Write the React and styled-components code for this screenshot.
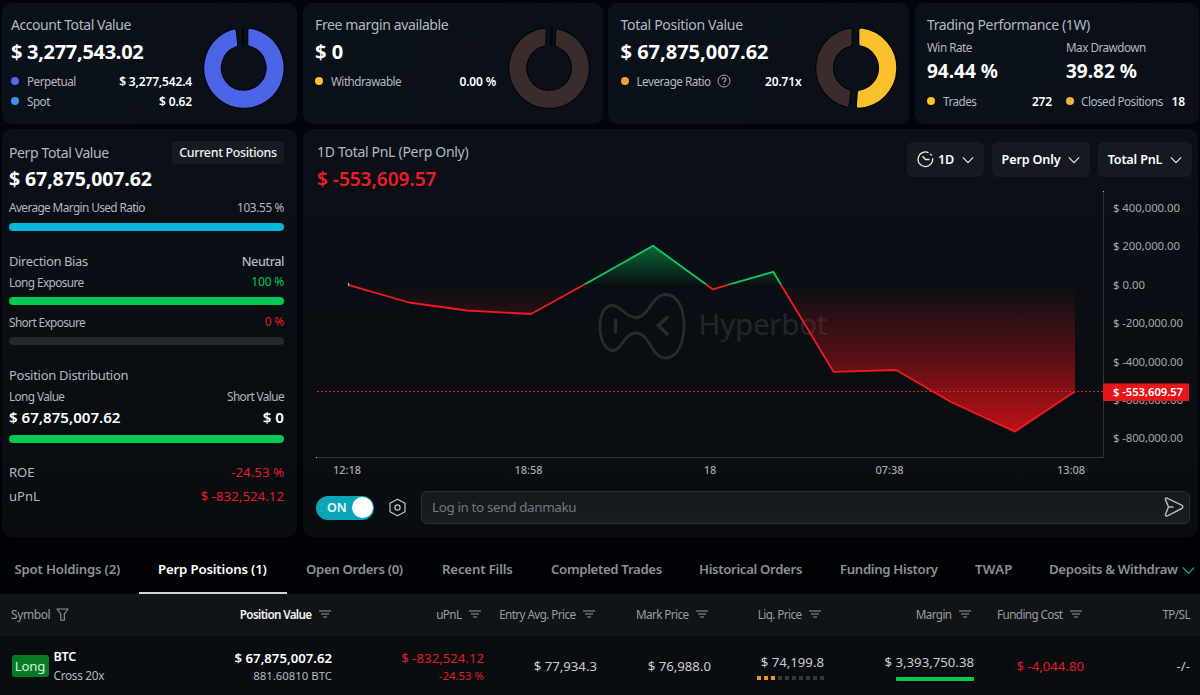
import styled, { createGlobalStyle } from "styled-components";

const GlobalStyle = createGlobalStyle`
  * {
    box-sizing: border-box;
  }
  body {
    margin: 0;
    background: linear-gradient(#02050f, #01040a 60%, #010206 80%);
    color: #f4f5f7;
    font-family: "Noto Sans", sans-serif;
    font-size: 12px;
    overflow: hidden;
  }
`;

const Page = styled.div`
  width: 1200px;
  height: 695px;
  overflow: hidden;
`;

// top cards
const Cards = styled.div`
  display: grid;
  grid-template-columns: 295px 300px 301px 284px;
  column-gap: 5.5px;
  padding: 3px 0 0 2px;
`;

const Card = styled.div`
  display: flex;
  justify-content: space-between;
  height: 121px;
  padding: 8px 12.5px 0 ${(props) => props.$left || 12.5}px;
  border-radius: 10px;
  background: linear-gradient(100deg, #0b1119, #0a0f18);
`;

const CardInfo = styled.div`
  width: ${(props) => props.$width || 181}px;
`;

const Line = styled.div`
  display: flex;
  align-items: center;
  justify-content: space-between;
  height: ${(props) => props.$height}px;
  margin-top: ${(props) => props.$top || 0}px;
  white-space: nowrap;
`;

const Text = styled.span`
  display: inline-flex;
  align-items: center;
  color: ${(props) => props.$color || "#b4b8c0"};
  font-size: ${(props) => props.$size || 12}px;
  font-weight: ${(props) => props.$weight || 400};
  letter-spacing: ${(props) => props.$space || 0}px;
  white-space: nowrap;
`;

const Title = styled(Text)`
  font-size: 14px;
  letter-spacing: ${(props) => props.$space || -0.38}px;
`;

const Label = styled(Text)`
  font-size: 11.7px;
  letter-spacing: -0.5px;
`;

const Value = styled(Text)`
  color: #ffffff;
  font-weight: 600;
  letter-spacing: -0.16px;
`;

const Amount = styled(Text)`
  color: ${(props) => props.$color || "#ffffff"};
  font-size: ${(props) => props.$size || 20}px;
  font-weight: ${(props) => props.$weight || 700};
`;

const Dot = styled.i`
  width: 8px;
  height: 8px;
  margin-right: ${(props) => props.$gap || 8}px;
  border-radius: 50%;
  background: ${(props) => props.color};
`;

const HelpIcon = styled.svg`
  margin-left: 6px;
`;

const Donut = styled.svg`
  width: 90px;
  height: 90px;
  margin: 12px -4px 0 0;
`;

const Columns = styled.div`
  display: grid;
  grid-template-columns: 125px 119px;
  column-gap: 14px;
`;

// middle panels
const Panels = styled.div`
  display: grid;
  grid-template-columns: 295px 895px;
  column-gap: 6px;
  padding: 5px 0 0 2px;
`;

const Panel = styled.div`
  height: 408px;
  border-radius: 10px;
  background: linear-gradient(#0b1018, #0a0e13 55%, #090c11);
`;

const SidePanel = styled(Panel)`
  padding: 10px 13px 0 7px;

  ${Line} {
    padding-bottom: ${1}px;
  }
  ${Label} {
    font-size: 11.8px;
    letter-spacing: -0.6px;
  }
`;

const Badge = styled.span`
  width: 112px;
  height: 23px;
  border-radius: 4px;
  background-color: #161b21;
  color: #f1f2f4;
  font-size: 12.4px;
  font-weight: 500;
  letter-spacing: -0.3px;
  line-height: 23px;
  text-align: center;
`;

const Bar = styled.div`
  height: 8px;
  margin-top: ${(props) => props.$top || 0}px;
  border-radius: 4px;
  background-color: ${(props) => props.color};
`;

const ChartHead = styled.div`
  display: flex;
  justify-content: space-between;
  height: 61px;
  padding: 9px 6px 0 14px;
`;

const Selects = styled.div`
  display: flex;
  gap: 8px;
  padding-top: 4px;
`;

const Select = styled.div`
  display: flex;
  align-items: center;
  justify-content: center;
  gap: 8px;
  width: ${(props) => props.$width}px;
  height: 35px;
  border-radius: 6px;
  background-color: #151a20;
  color: #ffffff;
  font-size: 12.6px;
  font-weight: 600;
  letter-spacing: -0.15px;
`;

const ClockIcon = styled.svg`
  margin-right: -4px;
`;

const Chart = styled.svg`
  display: block;
  width: 895px;
  height: 296px;
  font-family: "Noto Sans", sans-serif;
`;

const ChatRow = styled.div`
  display: flex;
  align-items: center;
  height: 33px;
  margin-top: 5px;
  padding: 0 8px 0 13px;
`;

const Toggle = styled.div`
  display: flex;
  align-items: center;
  justify-content: space-between;
  width: 58px;
  height: 24px;
  padding: 0 1px 0 11px;
  border-radius: 12px;
  background-color: #0ba5b8;
  color: #e8fbff;
  font-size: 12.5px;
  font-weight: 600;

  i {
    width: 21px;
    height: 21px;
    border-radius: 50%;
    background: #ffffff;
  }
`;

const ChatInput = styled.div`
  display: flex;
  flex: 1;
  align-items: center;
  justify-content: space-between;
  height: 33px;
  padding: 0 4px 1px 10px;
  border: 1px solid #2b2f34;
  border-radius: 6px;
  background: linear-gradient(#15191d, #181c20);
  color: #73777c;
  font-size: 13.4px;
  letter-spacing: -0.35px;
`;

const Hexagon = styled.svg`
  margin: 0 14px;
`;

// tabs and table
const Tabs = styled.div`
  display: flex;
  height: 57px;
`;

const Tab = styled.div`
  width: ${(props) => props.$width}px;
  flex: none;
  padding: 17px 0 0 ${(props) => props.$left || 19}px;
  border-bottom: 2px solid ${(props) => (props.$active ? "#d5d3da" : "transparent")};
  color: ${(props) => (props.$active ? "#ffffff" : "#8d9095")};
  font-size: 13.2px;
  font-weight: 600;
  line-height: 30px;
  letter-spacing: ${(props) => props.$space || -0.33}px;
  white-space: nowrap;

  svg {
    margin-left: 4px;
    vertical-align: -3px;
  }
`;

const TableRow = styled.div`
  display: grid;
  grid-template-columns: 332px 152px 113px 114px 113px 150px 110px 106px;
`;

const HeadRow = styled(TableRow)`
  height: 42px;
  background-color: #101417;
  border-bottom: 1px solid #14181b;
`;

const HeadCell = styled.div`
  display: flex;
  align-items: center;
  justify-content: flex-end;
  gap: 7.5px;
  padding: 0 ${(props) => props.$right || 0}px 1px 0;
  color: ${(props) => (props.$active ? "#f2f3f4" : "#9a9da2")};
  font-size: 11.7px;
  font-weight: ${(props) => (props.$active ? 600 : 400)};
  letter-spacing: ${(props) => (props.$active ? -0.65 : -0.58)}px;
  white-space: nowrap;
`;

const SymbolHead = styled.div`
  display: flex;
  flex: 1;
  align-items: center;
  gap: 6px;
  padding-left: 11px;
  color: #9a9da2;
  font-size: 12px;
  font-weight: 400;
  letter-spacing: -0.4px;
`;

const BodyRow = styled(TableRow)`
  height: 60px;
  background-color: #090c10;
`;

const Cell = styled.div`
  display: flex;
  flex-direction: column;
  align-items: flex-end;
  padding-top: ${(props) => props.$top}px;
`;

const Price = styled(Text)`
  color: ${(props) => props.$color || "#c9cbce"};
  font-size: 13.2px;
  line-height: 18px;
`;

const SubValue = styled(Text)`
  font-size: 11.4px;
  line-height: 18px;
`;

const SymbolCell = styled.div`
  display: flex;
  justify-content: space-between;
`;

const Coin = styled.div`
  display: flex;
  gap: 5px;
  padding: 11px 0 0 12px;
`;

const Side = styled.span`
  width: 37px;
  height: 22px;
  margin: 8px 0 0 -0.5px;
  border-radius: 3px;
  background-color: #087a26;
  color: #d8f5dc;
  font-size: 13.2px;
  letter-spacing: -0.1px;
  line-height: 22px;
  text-align: center;
`;

const Stack = styled.div`
  display: flex;
  flex-direction: column;
  line-height: 18px;
  padding-top: 1px;
`;

const Dots = styled.div`
  display: flex;
  gap: 3px;
  margin-top: 5px;

  i {
    width: 4px;
    height: 4px;
    background-color: #34373b;
  }
  i:nth-child(-n + 3) {
    background-color: #e59a1c;
  }
`;

const MarginBar = styled.div`
  width: 78px;
  height: 4px;
  margin-top: 6px;
  border-radius: 1px;
  background-color: #08c94f;
`;

const RED = "#e01c27";
const GREEN = "#05c956";

const Ring = ({ parts, tick }) => (
  <Donut viewBox="-46 -45.5 92 91">
    {parts.map((part) => (
      <g key={part.d} strokeLinejoin="round">
        <path d={part.d} fill="#020408" stroke="#020408" strokeWidth="5.4" />
        <path d={part.d} fill={part.color} stroke={part.color} strokeWidth="3.2" />
      </g>
    ))}
    {tick && <path d={tick} stroke="#020408" strokeWidth="2.4" />}
  </Donut>
);

const Chevron = ({ color = "#e4e5e7", size = 12 }) => (
  <svg width={size} height={size} viewBox="0 0 12 12" fill="none" stroke={color} strokeWidth="1.2">
    <path d="M.8 3.3 6 8.7l5.2-5.4" />
  </svg>
);

const SortIcon = () => (
  <svg width="12" height="8" viewBox="0 0 12 8" stroke="#94979b" strokeWidth="1.1">
    <path d="M0 1h12M2 4h8M4.2 7h3.8" />
  </svg>
);

const yTicks = [
  [208, "$ 400,000.00"],
  [245.5, "$ 200,000.00"],
  [284.5, "$ 0.00"],
  [323, "$ -200,000.00"],
  [362, "$ -400,000.00"],
  [399.5, "$ -600,000.00"],
  [437.5, "$ -800,000.00"],
];

const xTicks = [
  [347, "12:18"],
  [528.5, "18:58"],
  [710, "18"],
  [889.5, "07:38"],
  [1071, "13:08"],
];

const points =
  "348,284.8 409,302.5 467,310.5 531,314 584,284.8 653,245.8 713,289.4 728,284.8 773.3,271.8 781,284.8 833.5,371.8 896,370 951,402 1015,431.6 1075,391.5";

const PnlChart = () => (
  <Chart viewBox="303 190 895 296">
    <defs>
      <linearGradient id="up" gradientUnits="userSpaceOnUse" x1="0" y1="246" x2="0" y2="285">
        <stop offset="0" stopColor="#05a650" stopOpacity=".6" />
        <stop offset="1" stopColor="#05a650" stopOpacity="0" />
      </linearGradient>
      <linearGradient id="down" gradientUnits="userSpaceOnUse" x1="0" y1="285" x2="0" y2="432">
        <stop offset="0" stopColor="#cf1216" stopOpacity="0" />
        <stop offset=".5" stopColor="#cf1216" stopOpacity=".4" />
        <stop offset="1" stopColor="#cf1216" stopOpacity=".92" />
      </linearGradient>
      <clipPath id="above">
        <rect x="340" y="190" width="760" height="94.8" />
      </clipPath>
      <clipPath id="below">
        <rect x="340" y="284.8" width="760" height="170" />
      </clipPath>
    </defs>

    {/* watermark */}
    <g fill="none" stroke="#272b2f" strokeWidth="2.8" strokeLinecap="round">
      <path d="M612 305.5C604 305.5 600 315 600 327.500C600 341 606 350.500 613 350.500C622 350.500 624 333 636 333C650 333 651 358 665.500 358C677 358 684 344 684 325.500C684 307 677 294.500 665.500 294.500C652 294.500 649 317.500 636 317.500C624 317.500 622 305.500 612 305.500Z" />
      <path d="M615.500 320.500v11.500M667 317.500l-8.500 8 8.500 8.500" strokeWidth="3.4" />
    </g>
    <text x="698.500" y="335" fill="#22262a" fontSize="29.500" textLength="129" lengthAdjust="spacing">
      Hyperbot
    </text>

    <polygon points={`${points} 1075,284.8`} fill="url(#up)" clipPath="url(#above)" />
    <polygon points={`${points} 1075,284.8`} fill="url(#down)" clipPath="url(#below)" />
    <path d="M317 391.500H1103" stroke="#d81f2c" strokeDasharray="2 2" />
    <g fill="none" strokeWidth="1.8" strokeLinejoin="round">
      <polyline points={points} stroke="#0fc863" clipPath="url(#above)" />
      <polyline points={points} stroke="#ee1a20" clipPath="url(#below)" />
    </g>
    <path d="M348.500 283v3" stroke="#a5c9a5" />

    <path d="M316 457.500H1103.500V191" fill="none" stroke="#2f3239" />
    <path d="M1103 191.500h1M316 457.500h1" stroke="#b9bbc0" />

    <g fill="#a4a7ac" fontSize="11.400">
      {yTicks.map(([y, label]) => (
        <text key={label} x="1113" y={y + 4} textLength={y === 284.5 ? 32 : y < 300 ? 67 : 70}>
          {label}
        </text>
      ))}
      {xTicks.map(([x, label]) => (
        <text key={label} x={x} y="473.500" textAnchor="middle" fontSize="11" fontWeight="500">
          {label}
        </text>
      ))}
    </g>
    <rect x="1103" y="383.500" width="86" height="17.500" fill="#e51519" />
    <text x="1113" y="396.200" fill="#ffffff" fontSize="11.200" fontWeight="600" textLength="70">
      $ -553,609.57
    </text>
  </Chart>
);

const columns = [
  { name: "uPnL", right: 3 },
  { name: "Entry Avg. Price", right: 2 },
  { name: "Mark Price", right: 3 },
  { name: "Liq. Price", right: 3 },
  { name: "Margin", right: 3 },
  { name: "Funding Cost", right: 2 },
];

const tabs = [
  { name: "Spot Holdings (2)", width: 139, left: 14.5, space: -0.2 },
  { name: "Perp Positions (1)", width: 148, active: true, space: -0.15 },
  { name: "Open Orders (0)", width: 136 },
  { name: "Recent Fills", width: 109, space: -0.15 },
  { name: "Completed Trades", width: 148 },
  { name: "Historical Orders", width: 141 },
  { name: "Funding History", width: 135 },
  { name: "TWAP", width: 74, space: 0.3 },
];

export default function App() {
  return (
    <Page>
      <GlobalStyle />
      <Cards>
        <Card $left={9}>
          <CardInfo>
            <Line $height={27}>
              <Title $space={-0.45}>Account Total Value</Title>
            </Line>
            <Line $height={27}>
              <Amount $space={-0.3}>$ 3,277,543.02</Amount>
            </Line>
            <Line $height={20} $top={6}>
              <Label>
                <Dot color="#5468e8" />
                Perpetual
              </Label>
              <Value>$ 3,277,542.4</Value>
            </Line>
            <Line $height={20}>
              <Label>
                <Dot color="#3d8ff0" />
                Spot
              </Label>
              <Value>$ 0.62</Value>
            </Line>
          </CardInfo>
          <Ring
            parts={[{ color: "#4b65e6", d: "M6 -38.500A39 39 0 1 1 -10 -37.700L-8.600 -23.700A25 25 0 1 0 6 -24.300Z" }]}
            tick="M-1 -42V-22"
          />
        </Card>
        <Card>
          <CardInfo>
            <Line $height={27}>
              <Title>Free margin available</Title>
            </Line>
            <Line $height={27}>
              <Amount>$ 0</Amount>
            </Line>
            <Line $height={20} $top={6}>
              <Label>
                <Dot color="#fbc42d" />
                Withdrawable
              </Label>
              <Value>0.00 %</Value>
            </Line>
          </CardInfo>
          <Ring
            parts={[{ color: "#3a2c2b", d: "M9 -37.900A39 39 0 1 1 -5 -38.600L-5.500 -24.300A25 25 0 1 0 8.500 -23.500Z" }]}
            tick="M3 -42L2 -23"
          />
        </Card>
        <Card>
          <CardInfo>
            <Line $height={27}>
              <Title $space={-0.3}>Total Position Value</Title>
            </Line>
            <Line $height={27}>
              <Amount>$ 67,875,007.62</Amount>
            </Line>
            <Line $height={20} $top={6}>
              <Label>
                <Dot color="#f5a031" />
                Leverage Ratio
                <HelpIcon width="14" height="14" viewBox="0 0 14 14" fill="none" stroke="#a5a9b0">
                  <circle cx="7" cy="7" r="6" />
                  <path d="M5.100 5.600C5.100 3.200 8.900 3.200 8.900 5.500C8.900 7 7 6.900 7 8.500M7 9.800v1.100" strokeWidth="1.100" />
                </HelpIcon>
              </Label>
              <Value>20.71x</Value>
            </Line>
          </CardInfo>
          <Ring
            parts={[
              { color: "#3a2c2b", d: "M-6 -38.500A39 39 0 0 0 -9 38L-7.500 23.900A25 25 0 0 1 -6 -24.300Z" },
              { color: "#fbc02d", d: "M5 -38.700A39 39 0 0 1 2.500 39L3.500 24.800A25 25 0 0 0 5 -24.500Z" },
            ]}
          />
        </Card>
        <Card>
          <CardInfo $width={259}>
            <Line $height={27}>
              <Title>Trading Performance (1W)</Title>
            </Line>
            <Columns>
              <Line $height={18}>
                <Label>Win Rate</Label>
              </Line>
              <Line $height={18}>
                <Label>Max Drawdown</Label>
              </Line>
              <Line $height={30}>
                <Amount $size={19}>94.44 %</Amount>
              </Line>
              <Line $height={30}>
                <Amount $size={19}>39.82 %</Amount>
              </Line>
              <Line $height={20} $top={5}>
                <Label>
                  <Dot color="#fbc42d" />
                  Trades
                </Label>
                <Value>272</Value>
              </Line>
              <Line $height={20} $top={5}>
                <Label>
                  <Dot color="#f0b440" $gap={7} />
                  Closed Positions
                </Label>
                <Value>18</Value>
              </Line>
            </Columns>
          </CardInfo>
        </Card>
      </Cards>

      <Panels>
        <SidePanel>
          <Line $height={27}>
            <Title>Perp Total Value</Title>
            <Badge>Current Positions</Badge>
          </Line>
          <Line $height={25}>
            <Amount $size={19.5} $space={-0.1}>$ 67,875,007.62</Amount>
          </Line>
          <Line $height={20} $top={6}>
            <Label>Average Margin Used Ratio</Label>
            <Text $size={11.8} $space={-0.35}>103.55 %</Text>
          </Line>
          <Bar color="#04b7d8" $top={6} />
          <Line $height={24} $top={18}>
            <Text $size={13} $space={-0.38}>Direction Bias</Text>
            <Text $weight={500} $size={12.7} $space={-0.5}>Neutral</Text>
          </Line>
          <Line $height={18}>
            <Label>Long Exposure</Label>
            <Text $size={12} $space={-0.2} $color={GREEN}>100 %</Text>
          </Line>
          <Bar color={GREEN} $top={6} />
          <Line $height={20} $top={7}>
            <Label>Short Exposure</Label>
            <Text $size={12} $space={-0.2} $color={RED}>0 %</Text>
          </Line>
          <Bar color="#25282c" $top={5} />
          <Line $height={24} $top={18}>
            <Text $size={13} $space={-0.28}>Position Distribution</Text>
          </Line>
          <Line $height={19}>
            <Label>Long Value</Label>
            <Label>Short Value</Label>
          </Line>
          <Line $height={22}>
            <Amount $size={15.1} $weight={600}>$ 67,875,007.62</Amount>
            <Amount $size={15.1} $weight={600}>$ 0</Amount>
          </Line>
          <Bar color={GREEN} $top={7} />
          <Line $height={24} $top={17}>
            <Text $size={13}>ROE</Text>
            <Text $size={13.3} $color={RED}>-24.53 %</Text>
          </Line>
          <Line $height={24}>
            <Text $size={13}>uPnL</Text>
            <Text $size={13.3} $color={RED}>$ -832,524.12</Text>
          </Line>
        </SidePanel>

        <Panel>
          <ChartHead>
            <div>
              <Line $height={27}>
                <Title $space={-0.3}>1D Total PnL (Perp Only)</Title>
              </Line>
              <Line $height={27}>
                <Amount $size={19} $weight={600} $color="#f01c28">$ -553,609.57</Amount>
              </Line>
            </div>
            <Selects>
              <Select $width={77}>
                <ClockIcon width="17" height="17" viewBox="0 0 17 17" fill="none" stroke="#f0f1f3" strokeWidth="1.300">
                  <path d="M11.500 1.700A7.300 7.300 0 1 0 15.600 7.200M13.300 2.800l1.400 1.700M5.500 5.300l3 3.200h4" />
                </ClockIcon>
                1D
                <Chevron />
              </Select>
              <Select $width={98}>
                Perp Only
                <Chevron />
              </Select>
              <Select $width={94}>
                Total PnL
                <Chevron />
              </Select>
            </Selects>
          </ChartHead>
          <PnlChart />
          <ChatRow>
            <Toggle>
              ON
              <i />
            </Toggle>
            <Hexagon width="19" height="19" viewBox="0 0 19 19" fill="none" stroke="#c3c5c9" strokeWidth="1.200">
              <path d="M9.500 1.200 17 5.300v8.400L9.500 17.800 2 13.700V5.300Z" strokeLinejoin="round" />
              <circle cx="9.500" cy="9.500" r="2.600" />
            </Hexagon>
            <ChatInput>
              Log in to send danmaku
              <svg width="22" height="20" viewBox="0 0 22 20" fill="none" stroke="#b4b6b9" strokeWidth="1.500" strokeLinejoin="round">
                <path d="M2.500 2.600C2 1 3.200.8 4.500 1.300L18.600 8.200Q21 9.900 18.600 11.500L4.500 18.800C3 19.300 2 18.500 2.600 17L5.500 10ZM5.500 10H10" strokeLinecap="round" />
              </svg>
            </ChatInput>
          </ChatRow>
        </Panel>
      </Panels>

      <Tabs>
        {tabs.map((tab) => (
          <Tab key={tab.name} $width={tab.width} $left={tab.left} $active={tab.active} $space={tab.space}>
            {tab.name}
          </Tab>
        ))}
        <Tab $width={170}>
          Deposits &amp; Withdraw
          <Chevron color="#12a5a5" size={13} />
        </Tab>
      </Tabs>

      <HeadRow>
        <HeadCell $active $right={1}>
          <SymbolHead>
            Symbol
            <svg width="13" height="13" viewBox="0 0 13 13" fill="none" stroke="#94979b" strokeWidth="1.100" strokeLinejoin="round">
              <path d="M1 1h11L8.300 6v6.300H4.800V6Z" />
            </svg>
          </SymbolHead>
          Position Value
          <SortIcon />
        </HeadCell>
        {columns.map((column) => (
          <HeadCell key={column.name} $right={column.right}>
            {column.name}
            <SortIcon />
          </HeadCell>
        ))}
        <HeadCell>TP/SL</HeadCell>
      </HeadRow>
      <BodyRow>
        <SymbolCell>
          <Coin>
            <Side>Long</Side>
            <Stack>
              <Text $color="#fff" $weight={600} $size={12.6} $space={-0.2}>BTC</Text>
              <Text $size={11.8} $space={-0.3}>Cross 20x</Text>
            </Stack>
          </Coin>
          <Cell $top={13}>
            <Price $color="#fff" $weight={600}>$ 67,875,007.62</Price>
            <SubValue>881.60810 BTC</SubValue>
          </Cell>
        </SymbolCell>
        <Cell $top={13}>
          <Price $color={RED}>$ -832,524.12</Price>
          <SubValue $color={RED}>-24.53 %</SubValue>
        </Cell>
        <Cell $top={21}>
          <Price>$ 77,934.3</Price>
        </Cell>
        <Cell $top={21}>
          <Price>$ 76,988.0</Price>
        </Cell>
        <Cell $top={17}>
          <Price>$ 74,199.8</Price>
          <Dots>
            {[...Array(10)].map((_, i) => (
              <i key={i} />
            ))}
          </Dots>
        </Cell>
        <Cell $top={17}>
          <Price>$ 3,393,750.38</Price>
          <MarginBar />
        </Cell>
        <Cell $top={21}>
          <Price $color={RED}>$ -4,044.80</Price>
        </Cell>
        <Cell $top={21}>
          <Price>-/-</Price>
        </Cell>
      </BodyRow>
    </Page>
  );
}
